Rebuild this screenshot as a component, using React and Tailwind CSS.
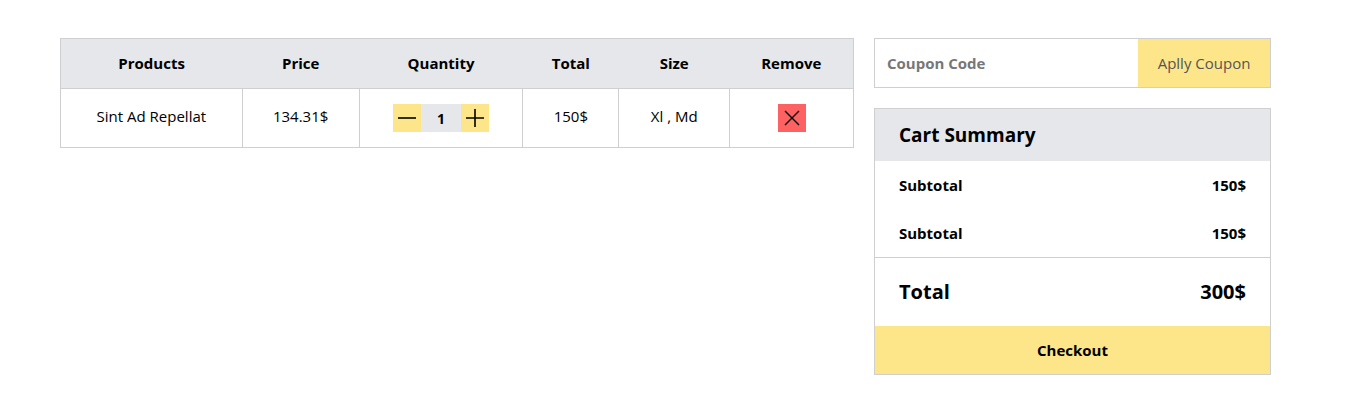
import { useState } from "react";

const font = { fontFamily: '"Open Sans", "Noto Sans", sans-serif' };

function QtyControl({ value, onChange }) {
  return (
    <div className="inline-flex items-center h-[28px] align-middle">
      <button onClick={() => onChange(Math.max(1, value - 1))} className="w-[28px] h-[28px] bg-[#fde68a] flex items-center justify-center">
        <svg width="20" height="20" viewBox="0 0 20 20"><path d="M1 10h18" stroke="#000" strokeWidth="1.6" /></svg>
      </button>
      <span className="w-[40px] h-[28px] bg-[#e5e7eb] flex items-center justify-center text-[14px] font-bold">{value}</span>
      <button onClick={() => onChange(value + 1)} className="w-[28px] h-[28px] bg-[#fde68a] flex items-center justify-center">
        <svg width="20" height="20" viewBox="0 0 20 20"><path d="M1 10h18M10 1v18" stroke="#000" strokeWidth="1.6" /></svg>
      </button>
    </div>
  );
}

export default function App() {
  const [qty, setQty] = useState(1);
  const cols = ["Products", "Price", "Quantity", "Total", "Size", "Remove"];
  const widths = ["w-[182px]", "w-[117px]", "w-[164px]", "w-[96px]", "w-[111px]", "w-[124px]"];

  return (
    <div className="bg-white min-h-screen pt-[38px] pl-[60px] text-black" style={font}>
      <div className="flex gap-[20px] items-start">
        <table className="w-[794px] border-collapse border border-[#cfcfcf] text-center">
          <thead>
            <tr className="bg-[#e5e7eb] h-[50px]">
              {cols.map((c, i) => (
                <th key={c} className={`${widths[i]} text-[15px] font-bold`}>{c}</th>
              ))}
            </tr>
          </thead>
          <tbody>
            <tr className="h-[59px] text-[15px] border-t border-[#cfcfcf]">
              <td className="border-r border-[#cfcfcf] pb-[3px]">Sint Ad Repellat</td>
              <td className="border-r border-[#cfcfcf] pb-[3px]">134.31$</td>
              <td className="border-r border-[#cfcfcf]">
                <QtyControl value={qty} onChange={setQty} />
              </td>
              <td className="border-r border-[#cfcfcf] pb-[3px]">150$</td>
              <td className="border-r border-[#cfcfcf] pb-[3px]">Xl , Md</td>
              <td>
                <button className="w-[28px] h-[28px] bg-[#fe6161] inline-flex items-center justify-center align-middle">
                  <svg width="18" height="18" viewBox="0 0 18 18"><path d="M2 2l14 14M16 2L2 16" stroke="#000" strokeWidth="1.4" /></svg>
                </button>
              </td>
            </tr>
          </tbody>
        </table>

        <div className="w-[397px] flex flex-col gap-[20px]">
          <div className="flex h-[50px] border border-[#cfcfcf]">
            <input
              placeholder="Coupon Code"
              className="flex-1 min-w-0 px-[12px] text-[15px] font-bold outline-none placeholder:text-[#777]"
            />
            <button className="w-[132px] bg-[#fde68a] text-[15px] text-[#555]">Aplly Coupon</button>
          </div>

          <div className="border border-[#cfcfcf]">
            <div className="bg-[#e5e7eb] h-[52px] px-[24px] flex items-center">
              <h2 className="text-[19px] font-bold">Cart Summary</h2>
            </div>
            <div className="px-[24px] h-[48px] flex items-center justify-between text-[15px] font-bold">
              <span>Subtotal</span>
              <span>150$</span>
            </div>
            <div className="px-[24px] h-[48px] flex items-center justify-between text-[15px] font-bold">
              <span>Subtotal</span>
              <span>150$</span>
            </div>
            <div className="border-t border-[#cfcfcf] px-[24px] h-[69px] flex items-center justify-between text-[20px] font-bold">
              <span>Total</span>
              <span>300$</span>
            </div>
            <button className="w-full h-[48px] bg-[#fde68a] text-[15px] font-bold">Checkout</button>
          </div>
        </div>
      </div>
    </div>
  );
}
